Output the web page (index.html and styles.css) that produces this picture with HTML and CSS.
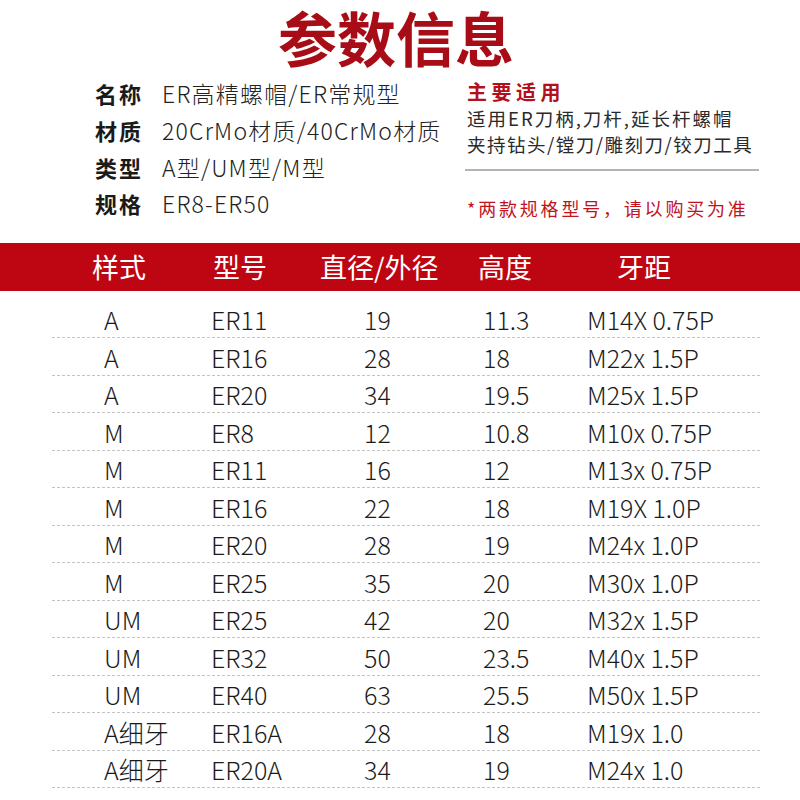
FILE: index.html
```html
<!DOCTYPE html>
<html lang="zh-CN">
<head>
<meta charset="utf-8">
<title>参数信息</title>
<link rel="stylesheet" href="styles.css">
</head>
<body>
<div class="page">
  <header class="title-wrap">
    <h1 class="title">参数信息</h1>
  </header>

  <section class="info">
    <div class="specs">
      <div class="spec"><span class="label">名称</span><span class="value">ER高精螺帽/ER常规型</span></div>
      <div class="spec"><span class="label">材质</span><span class="value">20CrMo材质/40CrMo材质</span></div>
      <div class="spec"><span class="label">类型</span><span class="value">A型/UM型/M型</span></div>
      <div class="spec"><span class="label">规格</span><span class="value">ER8-ER50</span></div>
    </div>
    <div class="usage">
      <div class="usage-title">主要适用</div>
      <div class="usage-text usage-text-a">适用ER刀柄,刀杆,延长杆螺帽</div>
      <div class="usage-text usage-text-b">夹持钻头/镗刀/雕刻刀/铰刀工具</div>
      <div class="rule"></div>
      <div class="note">*两款规格型号，请以购买为准</div>
    </div>
  </section>

  <div class="thead">
    <span>样式</span><span>型号</span><span>直径/外径</span><span>高度</span><span>牙距</span>
  </div>

  <div class="tbody">
    <div class="row"><span>A</span><span>ER11</span><span>19</span><span>11.3</span><span>M14X 0.75P</span></div>
    <div class="row"><span>A</span><span>ER16</span><span>28</span><span>18</span><span>M22x 1.5P</span></div>
    <div class="row"><span>A</span><span>ER20</span><span>34</span><span>19.5</span><span>M25x 1.5P</span></div>
    <div class="row"><span>M</span><span>ER8</span><span>12</span><span>10.8</span><span>M10x 0.75P</span></div>
    <div class="row"><span>M</span><span>ER11</span><span>16</span><span>12</span><span>M13x 0.75P</span></div>
    <div class="row"><span>M</span><span>ER16</span><span>22</span><span>18</span><span>M19X 1.0P</span></div>
    <div class="row"><span>M</span><span>ER20</span><span>28</span><span>19</span><span>M24x 1.0P</span></div>
    <div class="row"><span>M</span><span>ER25</span><span>35</span><span>20</span><span>M30x 1.0P</span></div>
    <div class="row"><span>UM</span><span>ER25</span><span>42</span><span>20</span><span>M32x 1.5P</span></div>
    <div class="row"><span>UM</span><span>ER32</span><span>50</span><span>23.5</span><span>M40x 1.5P</span></div>
    <div class="row"><span>UM</span><span>ER40</span><span>63</span><span>25.5</span><span>M50x 1.5P</span></div>
    <div class="row"><span>A细牙</span><span>ER16A</span><span>28</span><span>18</span><span>M19x 1.0</span></div>
    <div class="row"><span>A细牙</span><span>ER20A</span><span>34</span><span>19</span><span>M24x 1.0</span></div>
  </div>
</div>
</body>
</html>
```

FILE: styles.css
```css
* { box-sizing: border-box; }

html, body {
  margin: 0;
  padding: 0;
  background: #ffffff;
}

body {
  font-family: "Noto Sans CJK SC", "Noto Sans", sans-serif;
  color: #1b1b1b;
}

.page {
  width: 800px;
}

.title-wrap {
  display: flex;
  justify-content: center;
  padding: 4px 8px 0 0;
}

.title {
  margin: 0;
  font-size: 59px;
  line-height: 66px;
  font-weight: 700;
  color: #a80d17;
  white-space: nowrap;
}

.info {
  display: flex;
  padding-left: 95px;
  margin-top: 5px;
}

.specs {
  width: 372px;
  display: flex;
  flex-direction: column;
}

.spec {
  display: flex;
  align-items: center;
  height: 36.7px;
}

.label {
  width: 67px;
  font-size: 22px;
  font-weight: 700;
  letter-spacing: 2px;
  color: #1a1a1a;
}

.value {
  font-size: 23px;
  font-weight: 300;
  letter-spacing: 1.2px;
  color: #222222;
}

.usage {
  width: 292px;
  padding-top: 4px;
}

.usage-title {
  font-size: 20px;
  line-height: 26px;
  font-weight: 700;
  letter-spacing: 4.5px;
  color: #b3101b;
}

.usage-text {
  font-size: 18.5px;
  line-height: 26px;
  color: #2a2a2a;
  white-space: nowrap;
}

.usage-text-a { letter-spacing: 2px; }
.usage-text-b { letter-spacing: 1.5px; }

.rule {
  height: 2px;
  margin-top: 12px;
  margin-left: -2px;
  background: #b4b4b4;
}

.note {
  margin-top: 24px;
  font-size: 18px;
  line-height: 26px;
  letter-spacing: 2.8px;
  color: #c2121e;
  white-space: nowrap;
}

.thead {
  margin-top: 21px;
  height: 48px;
  background: #be0613;
  color: #ffffff;
  display: grid;
  grid-template-columns: 121px 107px 158px 139px 1fr;
  align-items: center;
  padding-left: 92px;
  font-size: 27px;
  font-weight: 400;
}

.tbody {
  padding-top: 10px;
  margin-left: 52px;
  width: 708px;
}

.row {
  height: 37.5px;
  border-bottom: 1px dashed #c4c4c4;
  display: grid;
  grid-template-columns: 107px 153px 119px 104px 1fr;
  align-items: center;
  padding-left: 52px;
  font-size: 25px;
  font-weight: 300;
  color: #1b1b1b;
  white-space: nowrap;
}
```
